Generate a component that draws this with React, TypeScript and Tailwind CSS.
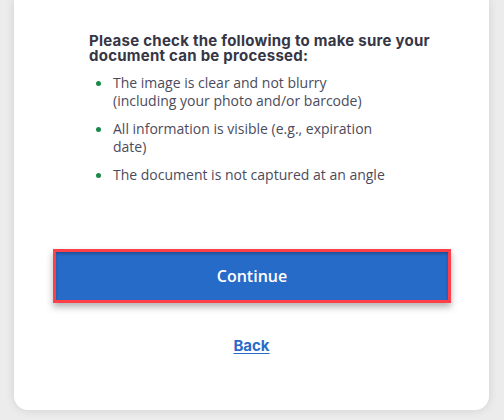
export default function App() {
  const items = [
    'The image is clear and not blurry (including your photo and/or barcode)',
    'All information is visible (e.g., expiration date)',
    'The document is not captured at an angle',
  ];

  return (
    <div className="h-[420px] w-[504px] overflow-hidden bg-[#ececec]">
      <div className="ml-[14px] mr-[15px] h-[410px] rounded-b-[14px] bg-white pt-[33px] shadow-[0_0_10px_rgba(0,0,0,0.12)]">
        <div className="pl-[75px]">
          <h2 className="w-[355px] font-['Inter',sans-serif] text-[15px] font-bold leading-[15px] tracking-[0.25px] text-[#363645]">
            Please check the following to make sure your document can be processed:
          </h2>
          <ul className="mt-[11px] flex flex-col gap-[10px] font-['Open_Sans',sans-serif] text-[14px] leading-[18px] text-[#4b4b5c]">
            {items.map((item) => (
              <li key={item} className="flex">
                <span className="mt-[7px] ml-[7px] mr-[12px] h-[5px] w-[5px] shrink-0 rounded-full bg-[#1a8a4a]" />
                <span className="w-[275px]">{item}</span>
              </li>
            ))}
          </ul>
        </div>

        <button
          type="button"
          className="mx-[39px] mt-[65px] flex h-[54px] w-[398px] items-center justify-center border-[3px] border-[#ff4049] bg-[#276bc8] font-['Open_Sans',sans-serif] text-[16px] font-semibold text-white shadow-[inset_0_2px_3px_rgba(0,0,0,0.25),0_4px_7px_rgba(0,0,0,0.3)]"
        >
          Continue
        </button>

        <div className="mt-[32px] flex justify-center">
          <a
            href="#"
            className="font-['Inter',sans-serif] text-[15px] font-bold text-[#2a6bc8] underline underline-offset-2"
          >
            Back
          </a>
        </div>
      </div>
    </div>
  );
}
